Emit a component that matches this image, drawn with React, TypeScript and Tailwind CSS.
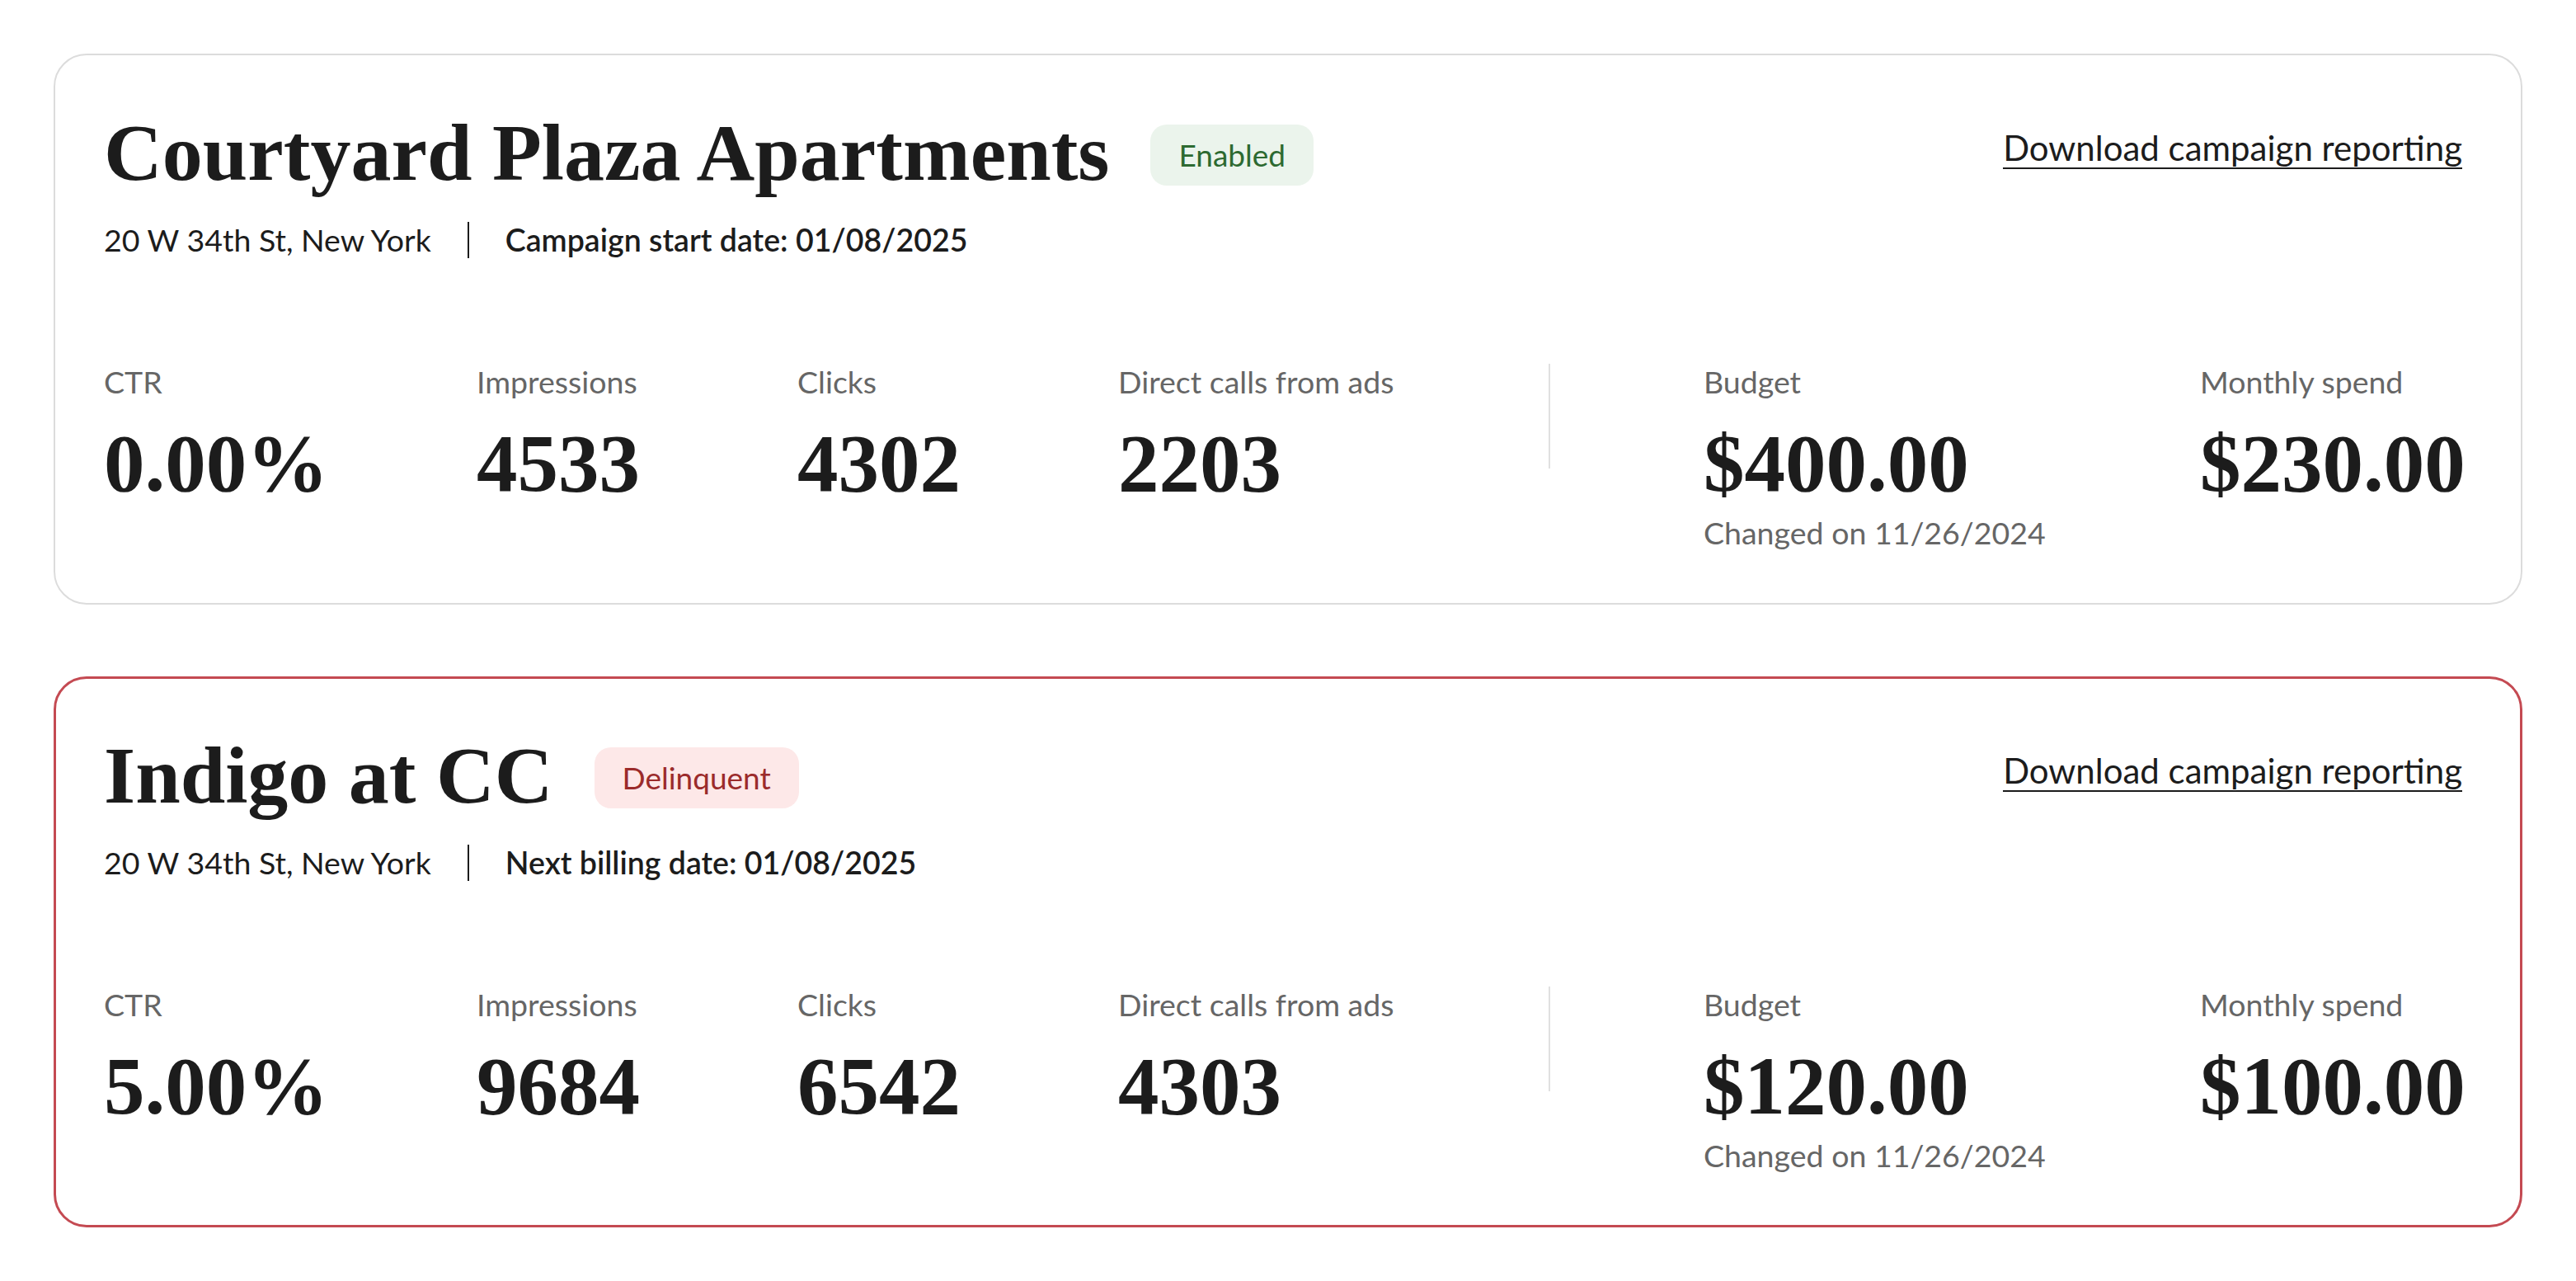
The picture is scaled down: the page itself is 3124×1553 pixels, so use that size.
import React from "react";

type Metric = { label: string; value: string; note?: string };

type Campaign = {
  name: string;
  status: "enabled" | "delinquent";
  address: string;
  dateLabel: string;
  metrics: Metric[];
  budget: Metric;
  spend: Metric;
};

const campaigns: Campaign[] = [
  {
    name: "Courtyard Plaza Apartments",
    status: "enabled",
    address: "20 W 34th St, New York",
    dateLabel: "Campaign start date: 01/08/2025",
    metrics: [
      { label: "CTR", value: "0.00%" },
      { label: "Impressions", value: "4533" },
      { label: "Clicks", value: "4302" },
      { label: "Direct calls from ads", value: "2203" },
    ],
    budget: { label: "Budget", value: "$400.00", note: "Changed on 11/26/2024" },
    spend: { label: "Monthly spend", value: "$230.00" },
  },
  {
    name: "Indigo at CC",
    status: "delinquent",
    address: "20 W 34th St, New York",
    dateLabel: "Next billing date: 01/08/2025",
    metrics: [
      { label: "CTR", value: "5.00%" },
      { label: "Impressions", value: "9684" },
      { label: "Clicks", value: "6542" },
      { label: "Direct calls from ads", value: "4303" },
    ],
    budget: { label: "Budget", value: "$120.00", note: "Changed on 11/26/2024" },
    spend: { label: "Monthly spend", value: "$100.00" },
  },
];

const colWidths = ["w-[452px]", "w-[389px]", "w-[389px]", "w-[522px]"];

function MetricBlock({ m, className }: { m: Metric; className?: string }) {
  return (
    <div className={className}>
      <div className="text-[37.5px] leading-[44px] text-[#666666]">{m.label}</div>
      <div className="mt-[18px] font-['Liberation_Serif',serif] text-[99px] leading-[118px] font-bold text-[#1c1c1c]">
        {m.value}
      </div>
      {m.note && (
        <div className="mt-[3px] text-[37.5px] leading-[44px] text-[#666666]">{m.note}</div>
      )}
    </div>
  );
}

function CampaignCard({ c }: { c: Campaign }) {
  const delinquent = c.status === "delinquent";
  return (
    <div
      className={
        delinquent
          ? "rounded-[40px] border-[3px] border-[#c44a52] bg-white pt-[58px] pb-[62px] pl-[58px] pr-[58px]"
          : "rounded-[40px] border-2 border-[#dcdcdc] bg-white pt-[59px] pb-[63px] pl-[59px] pr-[59px]"
      }
    >
      <div className="flex items-start justify-between">
        <div className="flex items-center gap-[50px]">
          <h2 className="font-['Liberation_Serif',serif] text-[98px] leading-[118px] font-bold text-[#1c1c1c]">
            {c.name}
          </h2>
          <span
            className={
              delinquent
                ? "mt-[6px] h-[74px] rounded-[20px] bg-[#fde8e8] px-[34px] text-[37px] leading-[74px] text-[#9b2b2b]"
                : "mt-[6px] h-[74px] rounded-[20px] bg-[#ebf4ec] px-[34px] text-[37px] leading-[74px] text-[#2d6a31]"
            }
          >
            {delinquent ? "Delinquent" : "Enabled"}
          </span>
        </div>
        <a
          href="#"
          className="mt-[31px] mr-[12px] border-b-2 border-[#1c1c1c] pb-[2px] text-[42px] leading-[44px] text-[#1c1c1c]"
        >
          Download campaign reporting
        </a>
      </div>

      <div className="mt-[25px] flex items-center gap-[44px] text-[37.5px] leading-[44px] text-[#1c1c1c]">
        <span>{c.address}</span>
        <span className="h-[44px] w-[2px] bg-[#1c1c1c]" />
        <span className="font-semibold">{c.dateLabel}</span>
      </div>

      <div className="mt-[128px] flex items-start">
        {c.metrics.map((m, i) => (
          <MetricBlock key={m.label} m={m} className={colWidths[i]} />
        ))}
        <div className="h-[127px] w-[2px] bg-[#e0e0e0]" />
        <MetricBlock m={c.budget} className="ml-[186px] w-[602px]" />
        <MetricBlock m={c.spend} className="flex-1" />
      </div>
    </div>
  );
}

export default function App() {
  return (
    <div className="min-h-screen bg-white px-[65px] pt-[65px] pb-[65px] font-['Lato',sans-serif]">
      <div className="flex flex-col gap-[87px]">
        {campaigns.map((c) => (
          <CampaignCard key={c.name} c={c} />
        ))}
      </div>
    </div>
  );
}
